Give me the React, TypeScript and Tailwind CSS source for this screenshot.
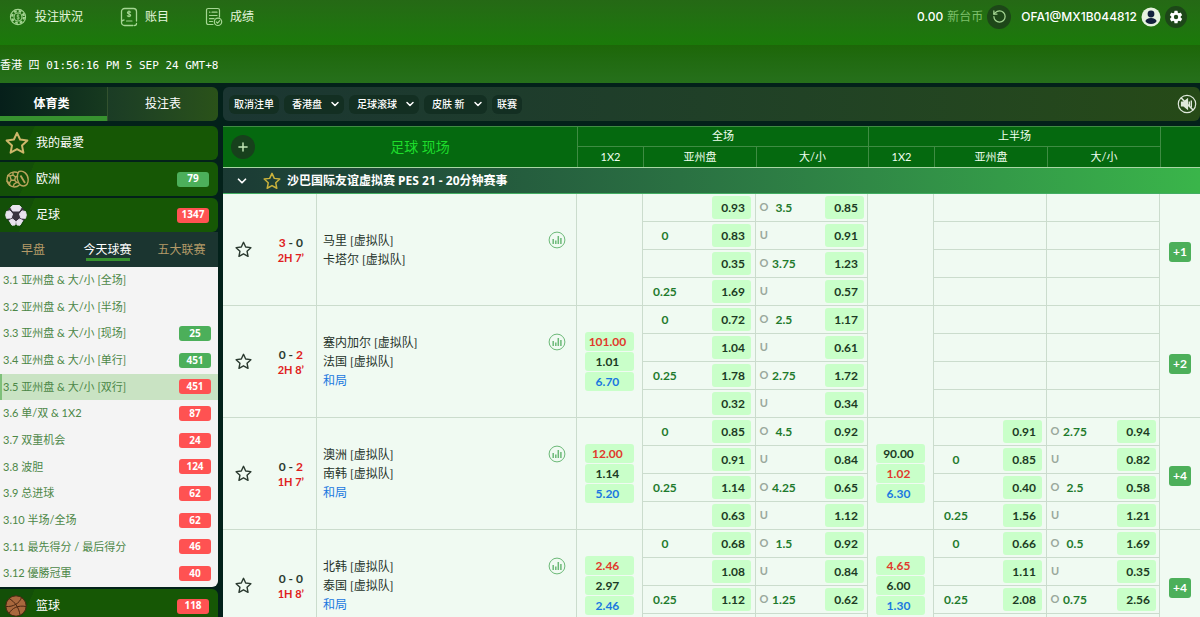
import React from 'react';
import { ChevronDown, Plus, RotateCcw } from 'lucide-react';
import { IoSettingsSharp } from 'react-icons/io5';

type Tone = 'red' | 'dark' | 'blue';
type Line = [hdp: string, hdpOdds: string, side: string, total: string, totalOdds: string];
type Win = [string, Tone][];

interface Match {
  score: [string, string];
  lead: 0 | 1 | null;
  time: string;
  teams: string[];
  fullWin: Win;
  full: Line[];
  halfWin: Win;
  half: Line[];
  more: string;
}

const blank: Line = ['', '', '', '', ''];
const empty: Line[] = [blank, blank, blank, blank];

const matches: Match[] = [
  {
    score: ['3', '0'], lead: 0, time: '2H 7’', teams: ['马里 [虚拟队]', '卡塔尔 [虚拟队]'],
    fullWin: [], halfWin: [], half: empty, more: '+1',
    full: [
      ['', '0.93', 'O', '3.5', '0.85'],
      ['0', '0.83', 'U', '', '0.91'],
      ['', '0.35', 'O', '3.75', '1.23'],
      ['0.25', '1.69', 'U', '', '0.57'],
    ],
  },
  {
    score: ['0', '2'], lead: 1, time: '2H 8’', teams: ['塞内加尔 [虚拟队]', '法国 [虚拟队]', '和局'],
    fullWin: [['101.00', 'red'], ['1.01', 'dark'], ['6.70', 'blue']], halfWin: [], half: empty, more: '+2',
    full: [
      ['0', '0.72', 'O', '2.5', '1.17'],
      ['', '1.04', 'U', '', '0.61'],
      ['0.25', '1.78', 'O', '2.75', '1.72'],
      ['', '0.32', 'U', '', '0.34'],
    ],
  },
  {
    score: ['0', '2'], lead: 1, time: '1H 7’', teams: ['澳洲 [虚拟队]', '南韩 [虚拟队]', '和局'],
    fullWin: [['12.00', 'red'], ['1.14', 'dark'], ['5.20', 'blue']],
    halfWin: [['90.00', 'dark'], ['1.02', 'red'], ['6.30', 'blue']], more: '+4',
    full: [
      ['0', '0.85', 'O', '4.5', '0.92'],
      ['', '0.91', 'U', '', '0.84'],
      ['0.25', '1.14', 'O', '4.25', '0.65'],
      ['', '0.63', 'U', '', '1.12'],
    ],
    half: [
      ['', '0.91', 'O', '2.75', '0.94'],
      ['0', '0.85', 'U', '', '0.82'],
      ['', '0.40', 'O', '2.5', '0.58'],
      ['0.25', '1.56', 'U', '', '1.21'],
    ],
  },
  {
    score: ['0', '0'], lead: null, time: '1H 8’', teams: ['北韩 [虚拟队]', '泰国 [虚拟队]', '和局'],
    fullWin: [['2.46', 'red'], ['2.97', 'dark'], ['2.46', 'blue']],
    halfWin: [['4.65', 'red'], ['6.00', 'dark'], ['1.30', 'blue']], more: '+4',
    full: [
      ['0', '0.68', 'O', '1.5', '0.92'],
      ['', '1.08', 'U', '', '0.84'],
      ['0.25', '1.12', 'O', '1.25', '0.62'],
      blank,
    ],
    half: [
      ['0', '0.66', 'O', '0.5', '1.69'],
      ['', '1.11', 'U', '', '0.35'],
      ['0.25', '2.08', 'O', '0.75', '2.56'],
      blank,
    ],
  },
];

const markets: { label: string; count?: string; green?: boolean; active?: boolean }[] = [
  { label: '3.1 亚州盘 & 大/小 [全场]' },
  { label: '3.2 亚州盘 & 大/小 [半场]' },
  { label: '3.3 亚州盘 & 大/小 [现场]', count: '25', green: true },
  { label: '3.4 亚州盘 & 大/小 [单行]', count: '451', green: true },
  { label: '3.5 亚州盘 & 大/小 [双行]', count: '451', active: true },
  { label: '3.6 单/双 & 1X2', count: '87' },
  { label: '3.7 双重机会', count: '24' },
  { label: '3.8 波胆', count: '124' },
  { label: '3.9 总进球', count: '62' },
  { label: '3.10 半场/全场', count: '62' },
  { label: '3.11 最先得分 / 最后得分', count: '46' },
  { label: '3.12 優勝冠軍', count: '40' },
];

const toneClass: Record<Tone, string> = {
  red: 'text-[#e03a2c]',
  dark: 'text-[#1c3a24]',
  blue: 'text-[#1a78e0]',
};

function ChipIcon() {
  return (
    <svg viewBox="0 0 18 18" className="size-[18px]" fill="none" stroke="#a5d693" strokeWidth="1.1">
      <circle cx="9" cy="9" r="7.6" />
      <circle cx="9" cy="9" r="5.9" strokeWidth="2.2" strokeDasharray="2.6 2.03" />
      <circle cx="9" cy="9" r="4" />
      <path d="M10.3 7.6c-.3-.6-2.5-.8-2.5.4s2.6.7 2.6 2-2.3 1.1-2.7.3M9 6.2v5.6" strokeWidth=".8" />
    </svg>
  );
}

function LedgerIcon() {
  return (
    <svg viewBox="0 0 18 20" className="h-5 w-[18px]" fill="none" stroke="#a5d693" strokeWidth="1.3" strokeLinecap="round">
      <path d="M13 18.5H4.5a3 3 0 0 1-3-3v-11a3 3 0 0 1 3-3h9a3 3 0 0 1 3 3V14M1.6 15c.2-1.3 1-2 2.4-2M16.5 16.5a2 2 0 0 1-2 2" />
      <path d="M10.6 5.2c-.6-.9-3.2-.8-3.2.6 0 1.5 3.3.9 3.3 2.5 0 1.5-2.8 1.5-3.4.5M9 3.8v6M6.5 14h5.5" strokeWidth="1.1" />
    </svg>
  );
}

function ResultIcon() {
  return (
    <svg viewBox="0 0 18 20" className="h-5 w-[18px]" fill="none" stroke="#a5d693" strokeWidth="1.2" strokeLinecap="round" strokeLinejoin="round">
      <path d="M8 17.5H3.2c-1 0-1.7-.7-1.7-1.7V3.2c0-1 .7-1.7 1.7-1.7h9.6c1 0 1.7.7 1.7 1.7V10" />
      <path d="M4.5 5.2h.4M7 5.2h5M4.5 8.5h7.5M4.5 11.7h4.5M4.5 14.5h3" />
      <circle cx="13" cy="14.8" r="3.7" />
      <path d="m11.3 14.9 1.2 1.2 2.3-2.5" />
    </svg>
  );
}

function StarIcon({ className }: { className: string }) {
  return (
    <svg viewBox="0 0 24 24" className={className} fill="none" stroke="currentColor" strokeWidth="2" strokeLinejoin="round">
      <path d="m12 1.8 3.1 6.7 7.3.9-5.4 5 1.4 7.3L12 18.1l-6.4 3.6L7 14.4l-5.4-5 7.3-.9z" />
    </svg>
  );
}

function EuroIcon() {
  return (
    <svg viewBox="0 0 24 20" className="h-5 w-6" fill="none" stroke="#b9a45c" strokeWidth="1.4">
      <path d="M13.500 4.200A7.500 7.500 0 1 0 14.500 16" />
      <path d="m5 7 3-1 2.500 2-.8 3.200H6.200zM8 6V3.200M10.500 8l2.500-1M9.700 11.200l2 2.300M6.200 11.200 4.500 14M5 7 2 6.500M1.500 12l3 2 .5 3M11.700 13.500l-2.500 1.500-1 2.500M11.700 13.500h2" />
      <path d="M14 2.500c4.500-1.500 9 2.500 9.200 8 .1 4-1.700 6.500-4.700 6.500-4.500 0-7-6-6-11 .2-1.600.5-3 1.500-3.500z" />
      <path d="m15.500 6.500 4.500 7.500" strokeWidth="1.8" />
    </svg>
  );
}

function SoccerIcon() {
  return (
    <svg viewBox="0 0 22 22" className="size-[22px]">
      <circle cx="11" cy="11" r="9.6" fill="#3a3440" />
      <g fill="#e9e3ef" stroke="#e9e3ef" strokeWidth="1" strokeLinejoin="round">
        <path d="M7.500 1.500h7l1.800 2-2 3.500H7.700l-2-3.500z" />
        <path d="m1.500 7.500 3.500-.6 2.500 3.100-1.300 4-4.700.3-.8-3.300z" />
        <path d="m20.500 7.500-3.500-.6-2.500 3.100 1.300 4 4.700.3.8-3.300z" />
        <path d="m4.200 16.500 3.300-1.500 3 2.300-.5 3.700-3 .2z" />
        <path d="m17.800 16.500-3.300-1.500-3 2.300.5 3.700 3 .2z" />
      </g>
    </svg>
  );
}

function BasketballIcon() {
  return (
    <svg viewBox="0 0 22 22" className="size-[22px]" fill="none" stroke="#4a2712" strokeWidth="1">
      <circle cx="11" cy="11" r="10.2" fill="#a9683d" />
      <path d="M4 3.500c5.500 3 10 9 11 16.500M1 11.500C8 12 14.500 8.500 16.500 2.500M4 18.500c3-5.500 9-8.500 17-7" />
    </svg>
  );
}

function StatsIcon() {
  return (
    <svg viewBox="0 0 18 18" className="size-[18px]" fill="none" stroke="#6cb978">
      <circle cx="9" cy="9" r="7.9" strokeWidth="1" />
      <path d="M5.200 8v5M7.800 9.500v3.500M10.300 5v8M12.900 7v6" strokeWidth="1.5" />
    </svg>
  );
}

function MuteIcon() {
  return (
    <svg viewBox="0 0 20 20" className="size-5" fill="none" stroke="#dfe8dc" strokeWidth="1.2">
      <circle cx="10" cy="10" r="8.7" />
      <path d="M4.500 8h2.300L10.500 5v10l-3.700-3H4.500z" fill="#dfe8dc" />
      <path d="M12.300 7.500v5M14.300 6.500v7" strokeWidth="1.4" />
      <path d="m4 3.800 12.300 12.500" strokeWidth="1.6" />
    </svg>
  );
}

function AvatarIcon() {
  return (
    <svg viewBox="0 0 20 20" className="size-5">
      <circle cx="10" cy="10" r="9.5" fill="#e6f2df" />
      <circle cx="10" cy="7" r="3.4" fill="#12203c" />
      <ellipse cx="10" cy="14" rx="5.5" ry="2.9" fill="#12203c" />
    </svg>
  );
}

function Badge({ children, green }: { children: React.ReactNode; green?: boolean }) {
  return (
    <span
      className={`flex h-[15px] w-8 items-center justify-center rounded-[3px] font-['Open_Sans',sans-serif] text-[10px] font-bold text-white ${
        green ? 'bg-[#4caf5a]' : 'bg-[#ff5252]'
      }`}
    >
      {children}
    </span>
  );
}

function SportRow({ icon, label, count, green }: { icon: React.ReactNode; label: string; count?: string; green?: boolean }) {
  return (
    <button
      type="button"
      className="flex h-[34px] w-full shrink-0 items-center rounded-r-md bg-linear-115 from-[#134f08] from-15% to-[#165705] to-15% pr-[9px] pl-[5px] text-left text-xs text-white"
    >
      <span className="flex w-[31px] items-center">{icon}</span>
      <span className="grow">{label}</span>
      {count && <Badge green={green}>{count}</Badge>}
    </button>
  );
}

function ToolSelect({ label, value }: { label: string; value: string }) {
  return (
    <label className="relative flex items-center rounded-md bg-[#132f22]">
      <select aria-label={label} defaultValue={value} className="h-[19px] appearance-none bg-transparent pr-[22px] pl-2 text-[10px] font-medium text-white outline-none">
        <option>{value}</option>
      </select>
      <ChevronDown className="pointer-events-none absolute right-[3px] size-3 text-white" strokeWidth={3} />
    </label>
  );
}

const line = 'border-[#cbdccd]';

function WinCell({ odds }: { odds: Win }) {
  return (
    <td rowSpan={4} className={`border-r border-b p-0 px-2 align-middle ${line}`}>
      <div className="flex flex-col gap-px">
        {odds.map(([value, tone], i) => (
          <button key={i} type="button" className={`h-[19px] rounded-[3px] bg-[#c9ffc9] pr-1 text-center text-[12px] leading-[19px] font-bold ${toneClass[tone]}`}>
            {value}
          </button>
        ))}
      </div>
    </td>
  );
}

function OddsButton({ value }: { value: string }) {
  if (!value) return null;
  return (
    <button type="button" className="ml-auto h-[23px] w-[39px] rounded-[3px] bg-[#c9ffc9] pr-1.5 text-right text-[12px] font-bold text-[#1c3a24]">
      {value}
    </button>
  );
}

function LineCells({ data }: { data: Line }) {
  const [hdp, hdpOdds, side, total, totalOdds] = data;
  return (
    <>
      <td className={`h-7 border-r border-b p-0 pr-1 ${line}`}>
        <div className="flex items-center">
          <span className="w-11 text-center text-[12px] font-bold text-[#1f7a2d]">{hdp}</span>
          <OddsButton value={hdpOdds} />
        </div>
      </td>
      <td className={`h-7 border-r border-b p-0 pr-[3px] ${line}`}>
        <div className="flex items-center">
          <span className="w-4 text-center text-[11px] font-bold text-[#9aa89c]">{side}</span>
          <span className="w-6 text-center text-[12px] font-bold text-[#1f7a2d]">{total}</span>
          <OddsButton value={totalOdds} />
        </div>
      </td>
    </>
  );
}

function MatchBody({ match }: { match: Match }) {
  return (
    <tbody>
      {match.full.map((full, i) => (
        <tr key={i}>
          {i === 0 && (
            <>
              <td rowSpan={4} className={`border-r border-b p-0 ${line}`}>
                <div className="flex items-center justify-between px-3">
                  <button type="button" aria-label="收藏" className="text-[#2b3a30]">
                    <StarIcon className="size-[17px]" />
                  </button>
                  <div className="text-center text-[12px] leading-[15px] font-bold text-[#2b3a30]">
                    <div>
                      <span className={match.lead === 0 ? 'text-[#e02020]' : ''}>{match.score[0]}</span> -{' '}
                      <span className={match.lead === 1 ? 'text-[#e02020]' : ''}>{match.score[1]}</span>
                    </div>
                    <div className="text-[11px] text-[#e02020]">{match.time}</div>
                  </div>
                </div>
              </td>
              <td rowSpan={4} className={`border-r border-b p-0 ${line}`}>
                <div className="flex items-start justify-between pr-[10px] pl-1.5">
                  <div className="text-[12px] leading-[19px] text-[#26332a]">
                    {match.teams.map((team) => (
                      <div key={team} className={team === '和局' ? 'text-[#1a78e0]' : ''}>{team}</div>
                    ))}
                  </div>
                  <button type="button" aria-label="统计">
                    <StatsIcon />
                  </button>
                </div>
              </td>
              <WinCell odds={match.fullWin} />
            </>
          )}
          <LineCells data={full} />
          {i === 0 && <WinCell odds={match.halfWin} />}
          <LineCells data={match.half[i]} />
          {i === 0 && (
            <td rowSpan={4} className={`border-b p-0 text-center ${line}`}>
              <button type="button" className="h-5 w-[22px] rounded-[3px] bg-[#4caf5a] text-[12px] font-bold text-white">
                {match.more}
              </button>
            </td>
          )}
        </tr>
      ))}
    </tbody>
  );
}

function OddsTable() {
  const head = 'border-l border-[#3f8c43] p-0 font-normal';
  return (
    <table className="w-full table-fixed border-separate border-spacing-0 bg-[#f0faf2] text-[#f0fff0]">
      <colgroup>
        <col className="w-[94px]" />
        <col />
        <col className="w-[66px]" />
        <col className="w-[113px]" />
        <col className="w-[112px]" />
        <col className="w-[66px]" />
        <col className="w-[113px]" />
        <col className="w-[113px]" />
        <col className="w-10" />
      </colgroup>
      <thead className="bg-[#05690f] text-[11px]">
        <tr className="h-[21px]">
          <th rowSpan={2} colSpan={2} className="border-t border-[#3f8c43] p-0 font-normal">
            <div className="flex items-center pl-2">
              <button type="button" aria-label="展开" className="flex size-6 items-center justify-center rounded-full bg-[#17401c] text-[#c4e8b8]">
                <Plus className="size-3.5" strokeWidth={2.5} />
              </button>
              <span className="grow pl-2 text-center text-sm text-[#1edc2c]">足球 现场</span>
            </div>
          </th>
          <th colSpan={3} className={`border-t border-b ${head}`}>全场</th>
          <th colSpan={3} className={`border-t border-b ${head}`}>上半场</th>
          <th rowSpan={2} className={`border-t ${head}`} aria-label="更多" />
        </tr>
        <tr className="h-5">
          <th className={head}>1X2</th>
          <th className={head}>亚州盘</th>
          <th className={head}>大/小</th>
          <th className={head}>1X2</th>
          <th className={head}>亚州盘</th>
          <th className={head}>大/小</th>
        </tr>
      </thead>
      <tbody>
        <tr>
          <td colSpan={9} className="h-[27px] border-t border-b border-t-[#a9d6a5] border-b-[#42ad62] bg-linear-to-r from-[#1b3a34] to-[#3ab54a] p-0">
            <div className="flex items-center pl-3 font-['Noto_Sans','Noto_Sans_CJK_SC',sans-serif] text-[12px] font-bold text-white">
              <button type="button" aria-label="收起" className="w-7">
                <ChevronDown className="size-3.5" strokeWidth={3} />
              </button>
              <button type="button" aria-label="收藏联赛" className="w-6 text-[#c9b23c]">
                <StarIcon className="size-[18px]" />
              </button>
              <span>沙巴国际友谊虚拟赛 PES 21 - 20分钟赛事</span>
            </div>
          </td>
        </tr>
      </tbody>
      {matches.map((match) => (
        <MatchBody key={match.teams[0]} match={match} />
      ))}
    </table>
  );
}

export default function App() {
  return (
    <div className="flex h-screen flex-col overflow-hidden bg-[#03211a] font-['Lato','Noto_Sans_CJK_SC',sans-serif]">
      <header className="shrink-0">
        <div className="flex h-[45px] items-center justify-between bg-linear-to-b from-[#256915] to-[#1a7a09] pr-[13px] pb-3 pl-[9px] text-xs text-[#e4f5dc]">
          <nav className="flex items-center">
            <a href="#bets" className="flex w-[111px] items-center gap-2"><ChipIcon />投注狀況</a>
            <a href="#account" className="flex w-[85px] items-center gap-[7px]"><LedgerIcon />账目</a>
            <a href="#results" className="flex items-center gap-[7px]"><ResultIcon />成绩</a>
          </nav>
          <div className="flex items-center font-['Inter','Noto_Sans_CJK_SC',sans-serif]">
            <span className="font-medium text-white">0.00</span>
            <span className="ml-1 text-[#7ec06c]">新台币</span>
            <button type="button" aria-label="刷新" className="ml-1 flex size-6 items-center justify-center rounded-full bg-[#1d4718] text-[#a5d693]">
              <RotateCcw className="size-[15px]" strokeWidth={2} />
            </button>
            <span className="ml-2.5 text-[12px] font-medium text-white">OFA1@MX1B044812</span>
            <button type="button" aria-label="用户" className="ml-1"><AvatarIcon /></button>
            <button type="button" aria-label="设置" className="ml-1 flex size-[22px] items-center justify-center rounded-full bg-[#1d4718] text-white">
              <IoSettingsSharp className="size-3.5" />
            </button>
          </div>
        </div>
        <div className="flex h-[38px] items-center bg-linear-to-b from-[#1d6708] to-[#26701b] pt-1 font-['DejaVu_Sans_Mono','Noto_Sans_CJK_SC',monospace] text-[11px] whitespace-pre text-white">
          香港 四 01:56:16 PM 5 SEP 24 GMT+8
        </div>
      </header>

      <div className="flex min-h-0 grow gap-[5px] pt-1">
        <aside className="flex w-[218px] shrink-0 flex-col">
          <div className="mb-[5px] flex h-[34px] shrink-0 text-xs text-white">
            <button type="button" className="w-[107px] border-b-[5px] border-[#37922f] bg-linear-to-r from-[#061f1a] to-[#173a1f] pt-1 pr-1 font-bold">体育类</button>
            <button type="button" className="grow rounded-r-md border-l border-[#33522f] bg-linear-to-r from-[#1b3c25] to-[#2a5219]">投注表</button>
          </div>
          <div className="flex flex-col gap-0.5">
            <SportRow icon={<StarIcon className="size-6 text-[#cdb76a]" />} label="我的最愛" />
            <SportRow icon={<EuroIcon />} label="欧洲" count="79" green />
            <div>
              <SportRow icon={<SoccerIcon />} label="足球" count="1347" />
              <div className="flex h-[35px] items-center bg-[#1b3530] text-xs text-[#b49a68]">
                <button type="button" className="w-[66px]">早盘</button>
                <button type="button" className="flex grow flex-col items-center pt-1 pl-1 text-white">
                  今天球赛
                  <span className="h-[3px] w-11 bg-[#37922f]" />
                </button>
                <button type="button" className="w-[73px]">五大联赛</button>
              </div>
              <ul className="grid h-[320px] auto-rows-fr overflow-hidden rounded-br-md bg-[#f4f4f4]">
                {markets.map((m) => (
                  <li key={m.label} className="flex">
                    <a
                      href="#market"
                      className={`flex grow items-center justify-between pr-[7px] text-[11px] text-[#4c8747] ${
                        m.active ? 'border-l-2 border-[#7fc07a] bg-[#c9e3c3] pl-px' : 'pl-[3px]'
                      }`}
                    >
                      <span>{m.label}</span>
                      {m.count && <Badge green={m.green}>{m.count}</Badge>}
                    </a>
                  </li>
                ))}
              </ul>
            </div>
            <SportRow icon={<BasketballIcon />} label="篮球" count="118" />
          </div>
        </aside>

        <main className="flex min-w-0 grow flex-col">
          <div className="mb-[5px] flex h-[34px] shrink-0 items-center gap-[5px] rounded-md bg-linear-to-r from-[#1b3632] to-[#264a17] pr-[3px] pl-1.5 text-[10px] font-medium text-white">
            <button type="button" className="h-[19px] rounded-md bg-[#132f22] px-[5px]">取消注单</button>
            <ToolSelect label="盘口" value="香港盘" />
            <ToolSelect label="视图" value="足球滚球" />
            <ToolSelect label="皮肤" value="皮肤 新" />
            <button type="button" className="h-[19px] rounded-md bg-[#132f22] px-[5px]">联赛</button>
            <button type="button" aria-label="静音" className="ml-auto"><MuteIcon /></button>
          </div>
          <OddsTable />
        </main>
      </div>
    </div>
  );
}
